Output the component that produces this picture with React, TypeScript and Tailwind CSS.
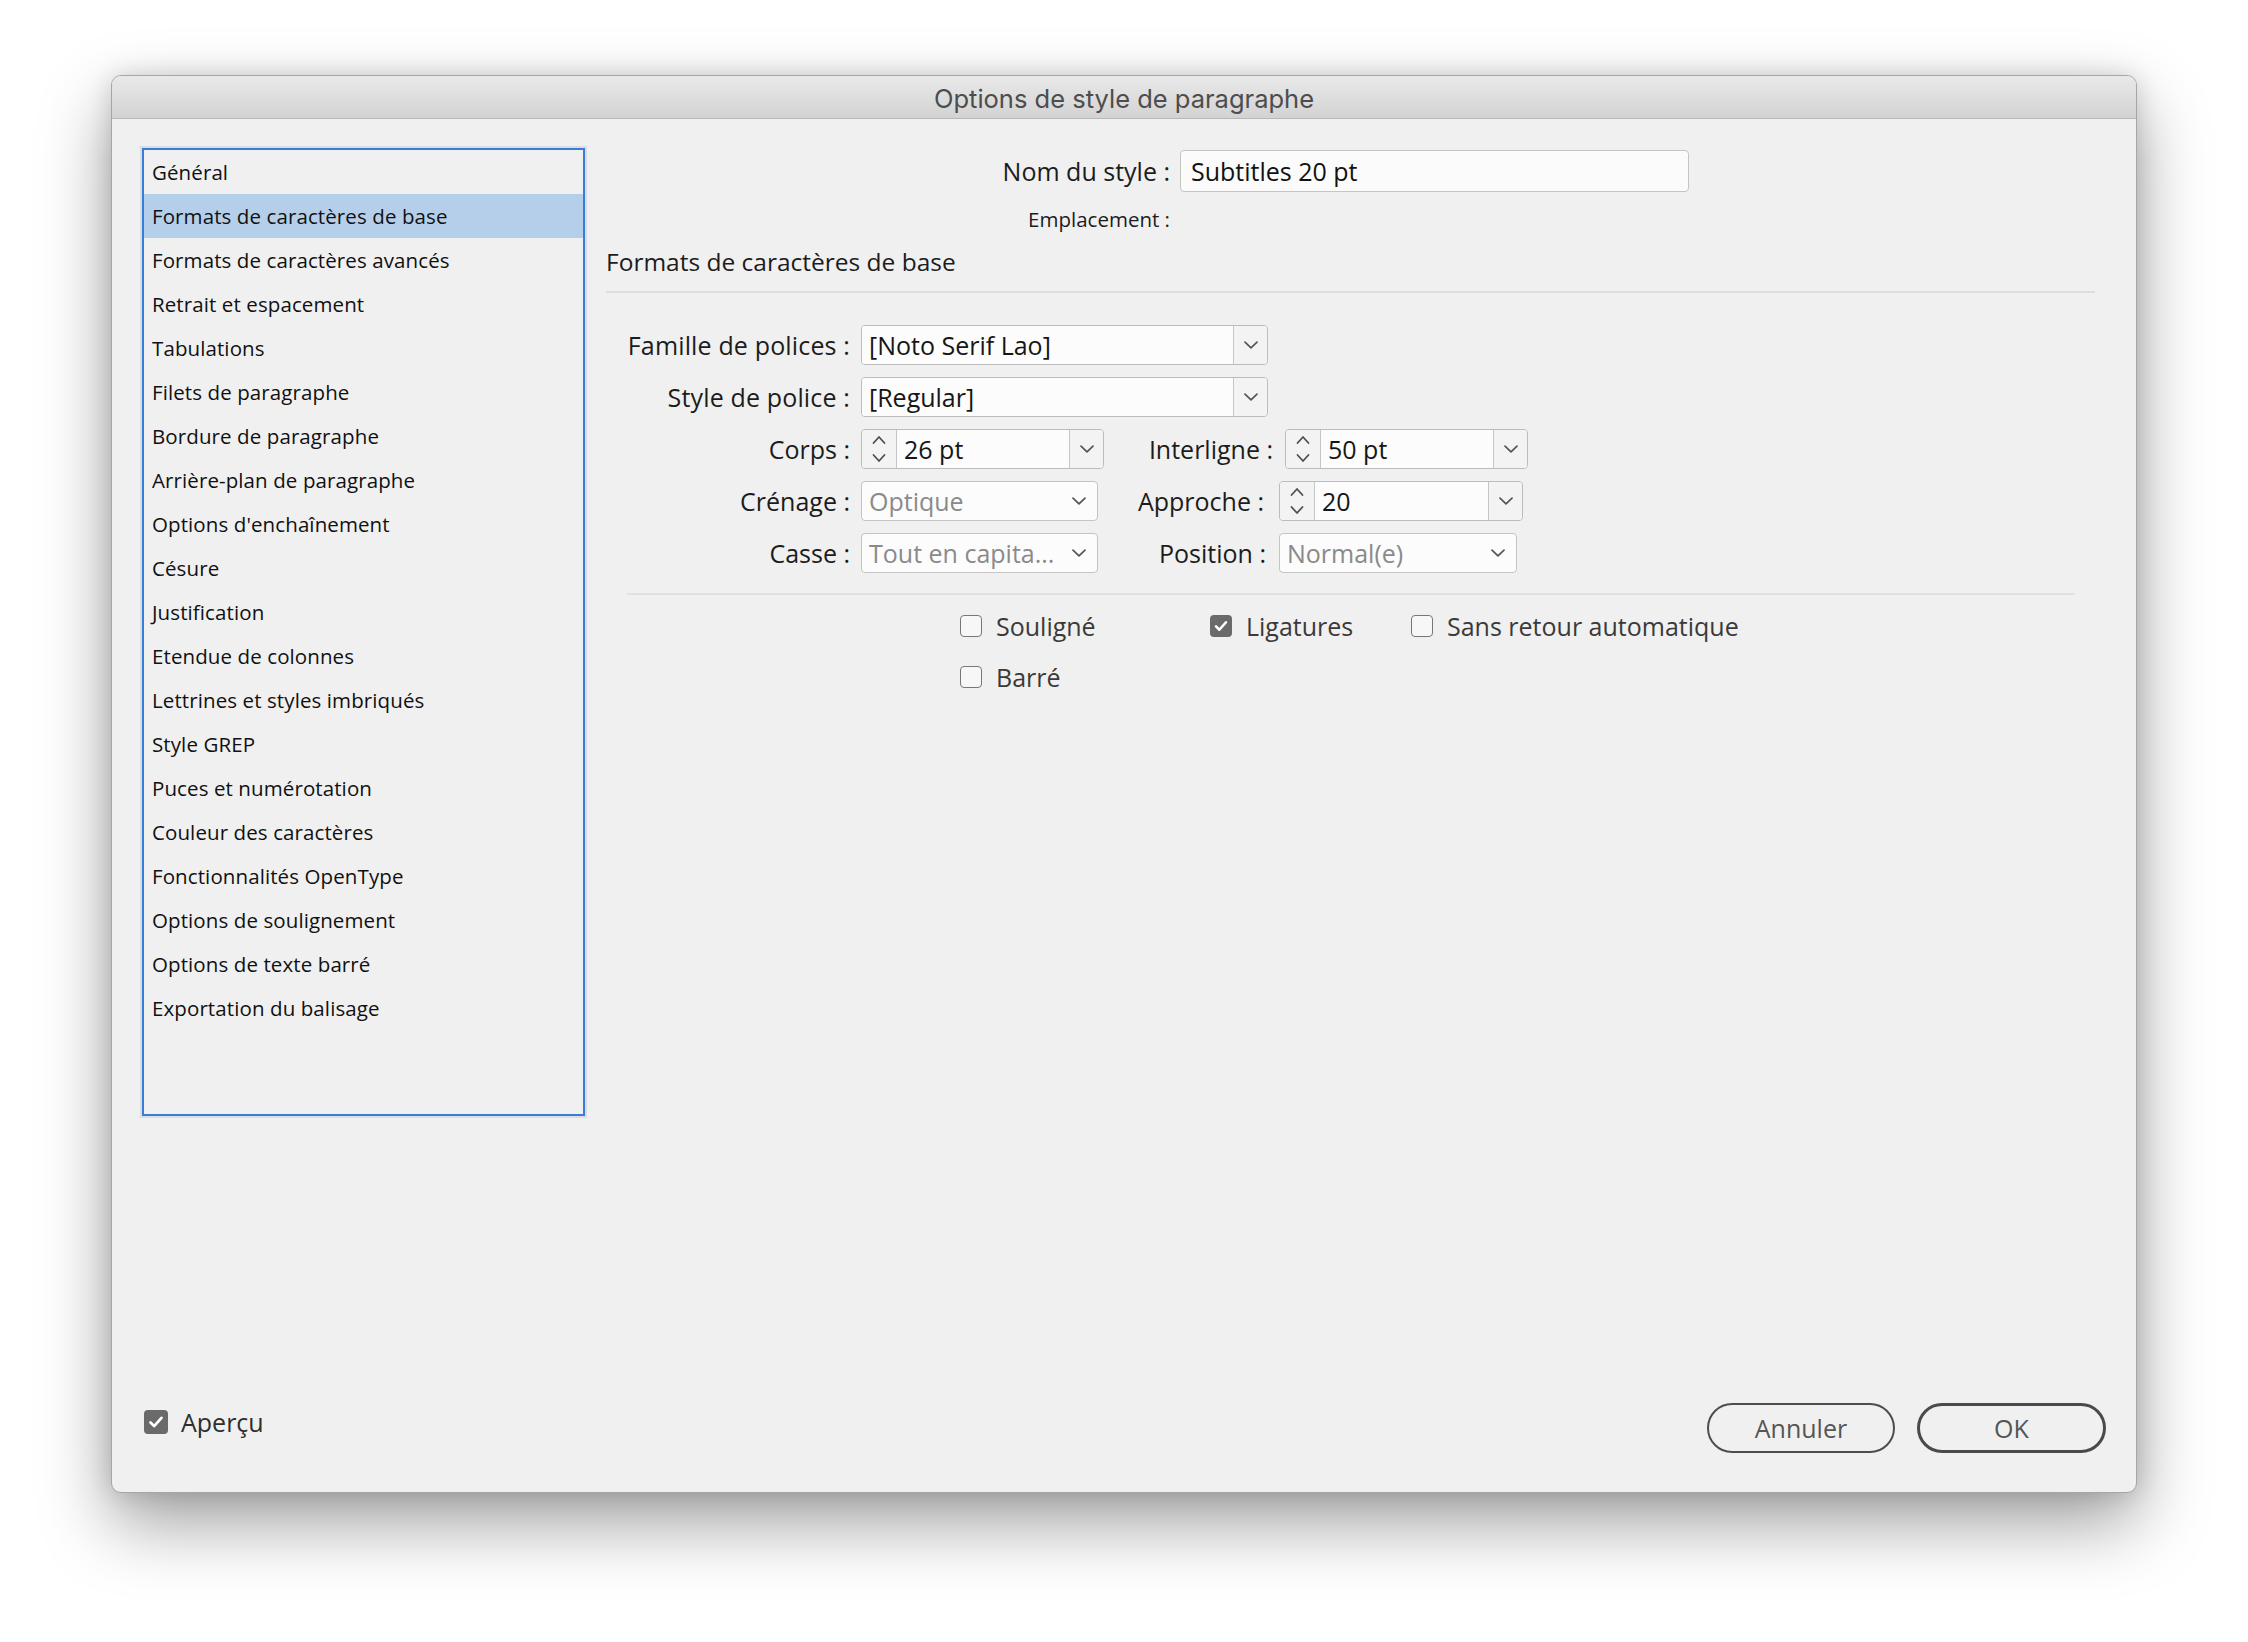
import React from "react";

function Chevron() {
  return (
    <svg width="14" height="8" viewBox="0 0 14 8">
      <path d="M1 1.2 L7 6.8 L13 1.2" fill="none" stroke="#555555" strokeWidth="1.7" strokeLinecap="round" strokeLinejoin="round" />
    </svg>
  );
}

function Stepper() {
  return (
    <svg width="16" height="30" viewBox="0 0 16 30">
      <path d="M2.5 9 L8 3 L13.5 9" fill="none" stroke="#4f4f4f" strokeWidth="1.8" strokeLinecap="round" strokeLinejoin="round" />
      <path d="M2.5 21 L8 27 L13.5 21" fill="none" stroke="#4f4f4f" strokeWidth="1.8" strokeLinecap="round" strokeLinejoin="round" />
    </svg>
  );
}

function CheckMark({ size }: { size: number }) {
  return (
    <svg width={size} height={size} viewBox="0 0 24 24">
      <path d="M6 12.5 L10 16.5 L18 7.5" fill="none" stroke="#ffffff" strokeWidth="3" strokeLinecap="round" strokeLinejoin="round" />
    </svg>
  );
}

function Checkbox({ checked }: { checked: boolean }) {
  if (checked) {
    return (
      <div className="w-[22px] h-[22px] shrink-0 rounded-[4px] bg-[#6a6a6a] flex items-center justify-center">
        <CheckMark size={20} />
      </div>
    );
  }
  return <div className="w-[22px] h-[22px] shrink-0 rounded-[4px] border-[1.5px] border-[#777777] bg-[#f7f7f7]" />;
}

function Combo({ className, value, stepper }: { className: string; value: string; stepper?: boolean }) {
  return (
    <div className={"h-[40px] shrink-0 flex rounded-[4px] border-[1.5px] border-[#bcbcbc] overflow-hidden " + className}>
      {stepper ? (
        <div className="w-[35px] shrink-0 flex items-center justify-center border-r-[1.5px] border-[#c6c6c6] bg-[#f3f3f3]">
          <Stepper />
        </div>
      ) : null}
      <div className="flex-1 min-w-0 bg-[#fcfcfc] flex items-center pl-[7px] text-[25px] leading-[34px] text-[#161616] whitespace-nowrap">
        {value}
      </div>
      <div className="w-[34px] shrink-0 flex items-center justify-center border-l-[1.5px] border-[#c6c6c6] bg-[#f3f3f3]">
        <Chevron />
      </div>
    </div>
  );
}

function Select({ className, value }: { className: string; value: string }) {
  return (
    <div className={"h-[40px] shrink-0 flex items-center justify-between rounded-[4px] border-[1.5px] border-[#c4c4c4] bg-[#fcfcfc] pl-[7px] pr-[11px] " + className}>
      <span className="text-[25px] leading-[34px] text-[#8a8a8a] whitespace-nowrap">{value}</span>
      <Chevron />
    </div>
  );
}

const listItems = [
  "Général",
  "Formats de caractères de base",
  "Formats de caractères avancés",
  "Retrait et espacement",
  "Tabulations",
  "Filets de paragraphe",
  "Bordure de paragraphe",
  "Arrière-plan de paragraphe",
  "Options d'enchaînement",
  "Césure",
  "Justification",
  "Etendue de colonnes",
  "Lettrines et styles imbriqués",
  "Style GREP",
  "Puces et numérotation",
  "Couleur des caractères",
  "Fonctionnalités OpenType",
  "Options de soulignement",
  "Options de texte barré",
  "Exportation du balisage",
];

export default function App() {
  return (
    <div className="w-[2248px] h-[1642px] bg-white pl-[111px] pt-[75px] font-['Open_Sans',sans-serif] overflow-hidden">
      <div className="w-[2026px] h-[1418px] rounded-[10px] bg-[#f0f0f0] border border-[#a6a6a6] shadow-[0_30px_70px_rgba(0,0,0,0.38),0_0_24px_rgba(0,0,0,0.14)] flex flex-col overflow-hidden">
        {/* Title bar */}
        <div className="h-[43px] shrink-0 bg-gradient-to-b from-[#e9e9e9] to-[#d3d3d3] border-b border-[#b7b7b7] flex items-center justify-center pt-[4px]">
          <span className="font-['Inter',sans-serif] text-[25.5px] leading-[30px] text-[#4d4d4d]">Options de style de paragraphe</span>
        </div>

        {/* Body */}
        <div className="flex-1 flex flex-col pt-[29px] pl-[30px] pr-[30px] pb-[39px]">
          <div className="flex items-start">
            {/* List */}
            <div className="w-[443px] h-[968px] shrink-0 border-2 border-[#3a7dd6] shadow-[0_0_0_2px_#d9dde2] bg-[#f0f0f0]">
              {listItems.map((item, i) => (
                <div
                  key={item}
                  className={
                    i === 1
                      ? "h-[44px] flex items-center pl-[8px] bg-[#b5cfeb] text-[20.5px] tracking-[0.1px] text-[#111111] whitespace-nowrap"
                      : "h-[44px] flex items-center pl-[8px] text-[20.5px] tracking-[0.1px] text-[#111111] whitespace-nowrap"
                  }
                >
                  {item}
                </div>
              ))}
            </div>

            {/* Right panel */}
            <div className="ml-[21px] w-[1489px] flex flex-col">
              <div className="flex items-center mt-[2px]">
                <div className="w-[564px] text-right text-[25px] leading-[34px] text-[#1c1c1c]">Nom du style :</div>
                <div className="ml-[10px] w-[509px] h-[42px] rounded-[4px] border-[1.5px] border-[#c4c4c4] bg-[#fbfbfb] flex items-center pl-[10px] text-[25px] leading-[34px] text-[#111111]">
                  Subtitles 20 pt
                </div>
              </div>
              <div className="flex mt-[13px]">
                <div className="w-[564px] text-right text-[20.5px] leading-[28px] text-[#1c1c1c]">Emplacement :</div>
              </div>
              <div className="mt-[12px] text-[24.5px] leading-[34px] text-[#1c1c1c]">Formats de caractères de base</div>
              <div className="mt-[12px] h-[2px] bg-[#dedede]" />

              {/* Form */}
              <div className="pl-[21px] pr-[20px] mt-[32px] flex flex-col">
                <div className="flex items-center h-[40px]">
                  <div className="w-[223px] text-right text-[25px] tracking-[0.15px] leading-[34px] text-[#1c1c1c] whitespace-nowrap">Famille de polices :</div>
                  <Combo className="ml-[11px] w-[407px]" value="[Noto Serif Lao]" />
                </div>
                <div className="flex items-center h-[40px] mt-[12px]">
                  <div className="w-[223px] text-right text-[25px] tracking-[0.15px] leading-[34px] text-[#1c1c1c] whitespace-nowrap">Style de police :</div>
                  <Combo className="ml-[11px] w-[407px]" value="[Regular]" />
                </div>
                <div className="flex items-center h-[40px] mt-[12px]">
                  <div className="w-[223px] text-right text-[25px] leading-[34px] text-[#1c1c1c] whitespace-nowrap">Corps :</div>
                  <Combo className="ml-[11px] w-[243px]" value="26 pt" stepper />
                  <div className="w-[169px] text-right text-[25px] leading-[34px] text-[#1c1c1c] whitespace-nowrap">Interligne :</div>
                  <Combo className="ml-[12px] w-[243px]" value="50 pt" stepper />
                </div>
                <div className="flex items-center h-[40px] mt-[12px]">
                  <div className="w-[223px] text-right text-[25px] leading-[34px] text-[#1c1c1c] whitespace-nowrap">Crénage :</div>
                  <Select className="ml-[11px] w-[237px]" value="Optique" />
                  <div className="w-[166px] text-right text-[25px] leading-[34px] text-[#1c1c1c] whitespace-nowrap">Approche :</div>
                  <Combo className="ml-[15px] w-[244px]" value="20" stepper />
                </div>
                <div className="flex items-center h-[40px] mt-[12px]">
                  <div className="w-[223px] text-right text-[25px] leading-[34px] text-[#1c1c1c] whitespace-nowrap">Casse :</div>
                  <Select className="ml-[11px] w-[237px]" value="Tout en capita..." />
                  <div className="w-[168px] text-right text-[25px] leading-[34px] text-[#1c1c1c] whitespace-nowrap">Position :</div>
                  <Select className="ml-[13px] w-[238px]" value="Normal(e)" />
                </div>

                <div className="mt-[20px] h-[2px] bg-[#e0e0e0]" />

                <div className="mt-[14px] ml-[333px] flex items-center h-[34px]">
                  <div className="w-[250px] flex items-center">
                    <Checkbox checked={false} />
                    <span className="ml-[14px] text-[25px] leading-[34px] text-[#3a3a3a]">Souligné</span>
                  </div>
                  <div className="w-[201px] flex items-center">
                    <Checkbox checked={true} />
                    <span className="ml-[14px] text-[25px] leading-[34px] text-[#3a3a3a]">Ligatures</span>
                  </div>
                  <div className="flex items-center">
                    <Checkbox checked={false} />
                    <span className="ml-[14px] text-[25px] leading-[34px] text-[#3a3a3a]">Sans retour automatique</span>
                  </div>
                </div>
                <div className="mt-[17px] ml-[333px] flex items-center h-[34px]">
                  <Checkbox checked={false} />
                  <span className="ml-[14px] text-[25px] leading-[34px] text-[#3a3a3a]">Barré</span>
                </div>
              </div>
            </div>
          </div>

          {/* Bottom bar */}
          <div className="mt-auto flex items-start justify-between">
            <div className="ml-[2px] mt-[7px] flex items-center">
              <div className="w-[24px] h-[24px] rounded-[4px] bg-[#6a6a6a] flex items-center justify-center">
                <CheckMark size={22} />
              </div>
              <span className="ml-[13px] text-[25px] leading-[24px] text-[#2e2e2e]">Aperçu</span>
            </div>
            <div className="flex items-center">
              <button className="w-[188px] h-[50px] rounded-full border-2 border-[#4d4d4d] bg-[#f0f0f0] flex items-center justify-center text-[25px] leading-[34px] text-[#555555]">
                Annuler
              </button>
              <button className="ml-[22px] w-[189px] h-[50px] rounded-full border-[3.5px] border-[#4a4a4a] bg-[#f0f0f0] flex items-center justify-center text-[25px] leading-[34px] text-[#555555]">
                OK
              </button>
            </div>
          </div>
        </div>
      </div>
    </div>
  );
}
